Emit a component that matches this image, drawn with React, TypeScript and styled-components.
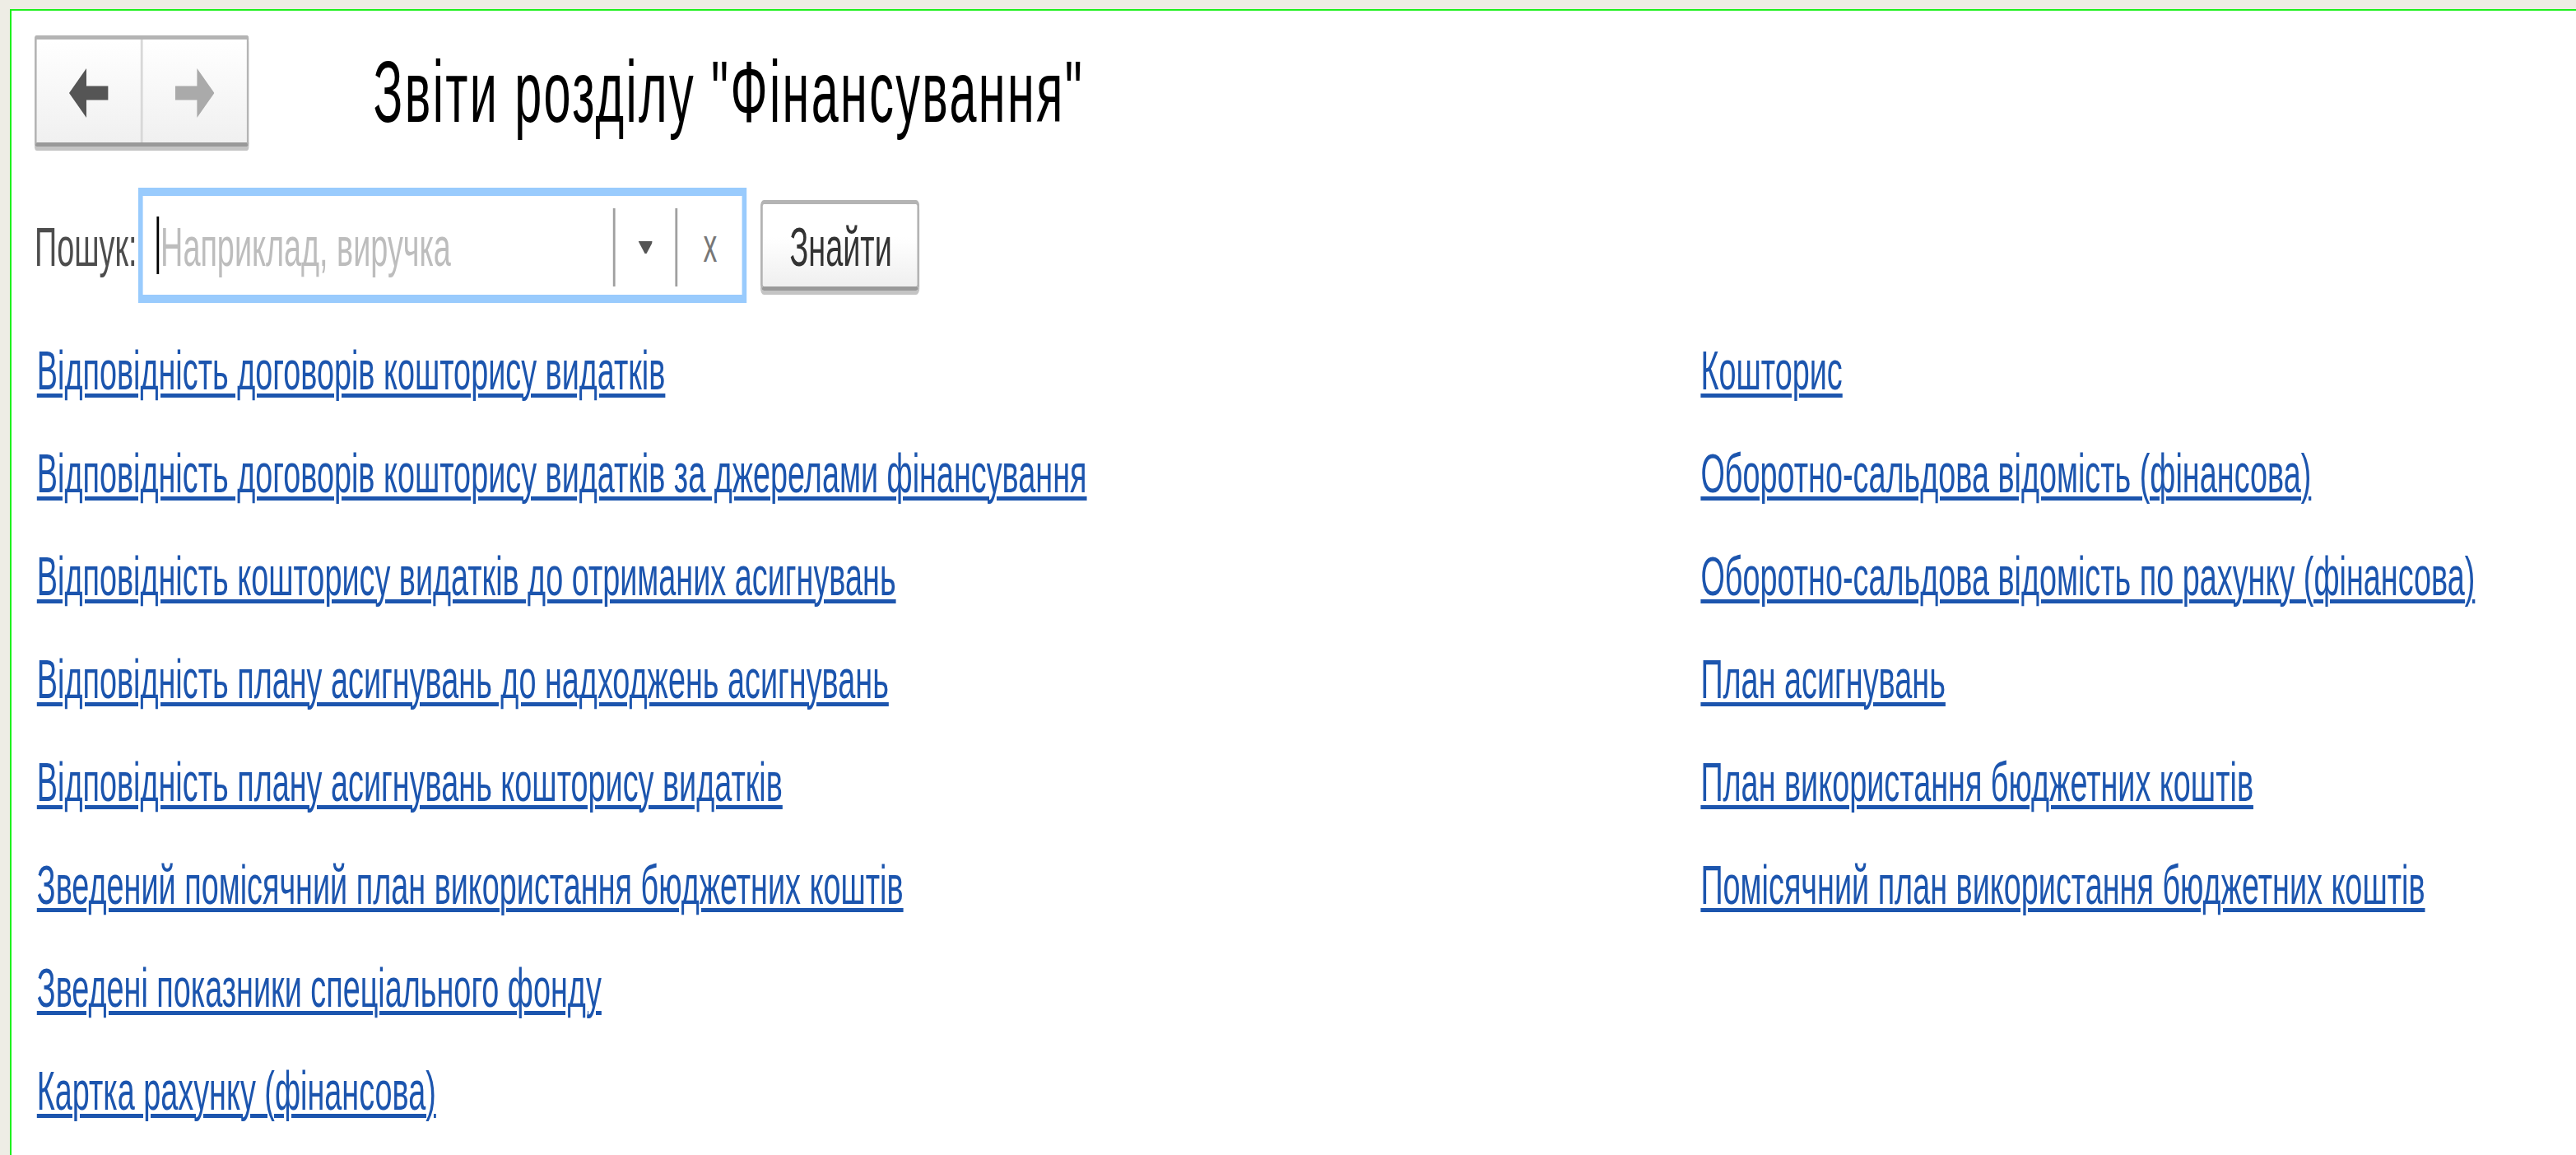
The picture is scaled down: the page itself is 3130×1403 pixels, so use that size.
import styled, { createGlobalStyle } from 'styled-components'

// the form is drawn at its native size and stretched as a whole
const SX = 2.8
const SY = 5

const GlobalStyle = createGlobalStyle`
  html, body {
    margin: 0;
    padding: 0;
    height: 100%;
    overflow: hidden;
    background: #eeede5;
  }
  #root {
    height: 100%;
  }
`

const Frame = styled.div`
  height: 100vh;
  box-sizing: border-box;
  padding: 11px 0 0 12px;
`

const Panel = styled.div`
  height: 100%;
  background: #fff;
  border-top: 2px solid #1df01d;
  border-left: 2px solid #1df01d;
  overflow: hidden;
`

const Form = styled.div`
  width: 1113px;
  padding-top: 6.4px;
  transform: scale(${SX}, ${SY});
  transform-origin: 0 0;
  font-family: 'Liberation Sans', Arial, sans-serif;
  font-size: 13.5px;
`

const Header = styled.div`
  display: flex;
  align-items: center;
  gap: 54px;
  padding-left: 10px;
`

const NavGroup = styled.div`
  display: flex;
  height: 27px;
  box-sizing: border-box;
  border: 1px solid #b4b4b4;
  border-bottom-color: #999;
  border-radius: 1px;
  box-shadow: 0 1px 0 #c4c4c4;
  background: linear-gradient(#fff, #f0f0f0);
`

const NavButton = styled.div<{ $divider?: boolean }>`
  width: 45px;
  display: flex;
  align-items: center;
  justify-content: center;
  border-left: ${(p) => (p.$divider ? '1.4px solid #d8d8d8' : 'none')};
`

const Title = styled.h1`
  margin: 0;
  font-size: 21.2px;
  font-weight: 400;
  letter-spacing: 0.85px;
  color: #000;
  white-space: nowrap;
`

const SearchRow = styled.div`
  display: flex;
  align-items: center;
  margin-top: 9.8px;
  padding-left: 10px;
`

const Label = styled.span`
  width: 45.4px;
  color: #4d4d4d;
  white-space: nowrap;
`

const Field = styled.div`
  display: flex;
  align-items: center;
  width: 264px;
  height: 28.2px;
  box-sizing: border-box;
  border: 2px solid #99cbfd;
  background: #fff;
`

const InputArea = styled.div`
  flex: 1;
  display: flex;
  align-items: center;
  padding-left: 5.5px;
  color: #bdbdbd;
  white-space: nowrap;
`

const Caret = styled.span`
  width: 1.2px;
  height: 14px;
  margin-right: 0.6px;
  background: #000;
`

const FieldCell = styled.div<{ $w: number }>`
  width: ${(p) => p.$w}px;
  height: 19.4px;
  display: flex;
  align-items: center;
  justify-content: center;
  border-left: 1px solid #a0a0a0;
  color: #777;
  font-size: 12px;
`

const FindButton = styled.div`
  margin-left: 6px;
  width: 69px;
  height: 21.6px;
  box-sizing: border-box;
  display: flex;
  align-items: center;
  justify-content: center;
  border: 1px solid #b4b4b4;
  border-bottom-color: #999;
  border-radius: 1.5px;
  box-shadow: 0 1px 0 #c4c4c4;
  background: linear-gradient(#fff 40%, #efefef);
  color: #333;
`

const Links = styled.div`
  display: grid;
  grid-template-columns: 722px 1fr;
  margin-top: 3.5px;
  padding-left: 11px;
`

const LinkColumn = styled.div`
  display: flex;
  flex-direction: column;
`

const LinkRow = styled.div`
  line-height: 25px;
  white-space: nowrap;
`

const ReportLink = styled.a`
  color: #1c55ae;
  text-decoration: underline;
  text-decoration-thickness: 1px;
  text-underline-offset: 1.2px;
  cursor: pointer;
`

const leftReports = [
  'Відповідність договорів кошторису видатків',
  'Відповідність договорів кошторису видатків за джерелами фінансування',
  'Відповідність кошторису видатків до отриманих асигнувань',
  'Відповідність плану асигнувань до надходжень асигнувань',
  'Відповідність плану асигнувань кошторису видатків',
  'Зведений помісячний план використання бюджетних коштів',
  'Зведені показники спеціального фонду',
  'Картка рахунку (фінансова)',
]

const rightReports = [
  'Кошторис',
  'Оборотно-сальдова відомість (фінансова)',
  'Оборотно-сальдова відомість по рахунку (фінансова)',
  'План асигнувань',
  'План використання бюджетних коштів',
  'Помісячний план використання бюджетних коштів',
]

const Arrow = ({ dir, color }: { dir: 'left' | 'right'; color: string }) => (
  <svg
    width="17"
    height="12"
    viewBox="0 0 17 12"
    style={dir === 'right' ? { transform: 'scaleX(-1)' } : undefined}
  >
    <path d="M0 6 L7.5 0 L7.5 4.3 L17 4.3 L17 7.7 L7.5 7.7 L7.5 12 Z" fill={color} />
  </svg>
)

export default function App() {
  return (
    <>
      <GlobalStyle />
      <Frame>
        <Panel>
          <Form>
            <Header>
              <NavGroup>
                <NavButton>
                  <Arrow dir="left" color="#555" />
                </NavButton>
                <NavButton $divider>
                  <Arrow dir="right" color="#aaa" />
                </NavButton>
              </NavGroup>
              <Title>Звіти розділу "Фінансування"</Title>
            </Header>

            <SearchRow>
              <Label>Пошук:</Label>
              <Field>
                <InputArea>
                  <Caret />
                  Наприклад, виручка
                </InputArea>
                <FieldCell $w={25.7}>
                  <svg width="6.4" height="3.4" viewBox="0 0 6.4 3.4">
                    <path d="M0 0 H6.4 L3.2 3.4 Z" fill="#555" />
                  </svg>
                </FieldCell>
                <FieldCell $w={28.4}>x</FieldCell>
              </Field>
              <FindButton>Знайти</FindButton>
            </SearchRow>

            <Links>
              <LinkColumn>
                {leftReports.map((r) => (
                  <LinkRow key={r}>
                    <ReportLink>{r}</ReportLink>
                  </LinkRow>
                ))}
              </LinkColumn>
              <LinkColumn>
                {rightReports.map((r) => (
                  <LinkRow key={r}>
                    <ReportLink>{r}</ReportLink>
                  </LinkRow>
                ))}
              </LinkColumn>
            </Links>
          </Form>
        </Panel>
      </Frame>
    </>
  )
}
